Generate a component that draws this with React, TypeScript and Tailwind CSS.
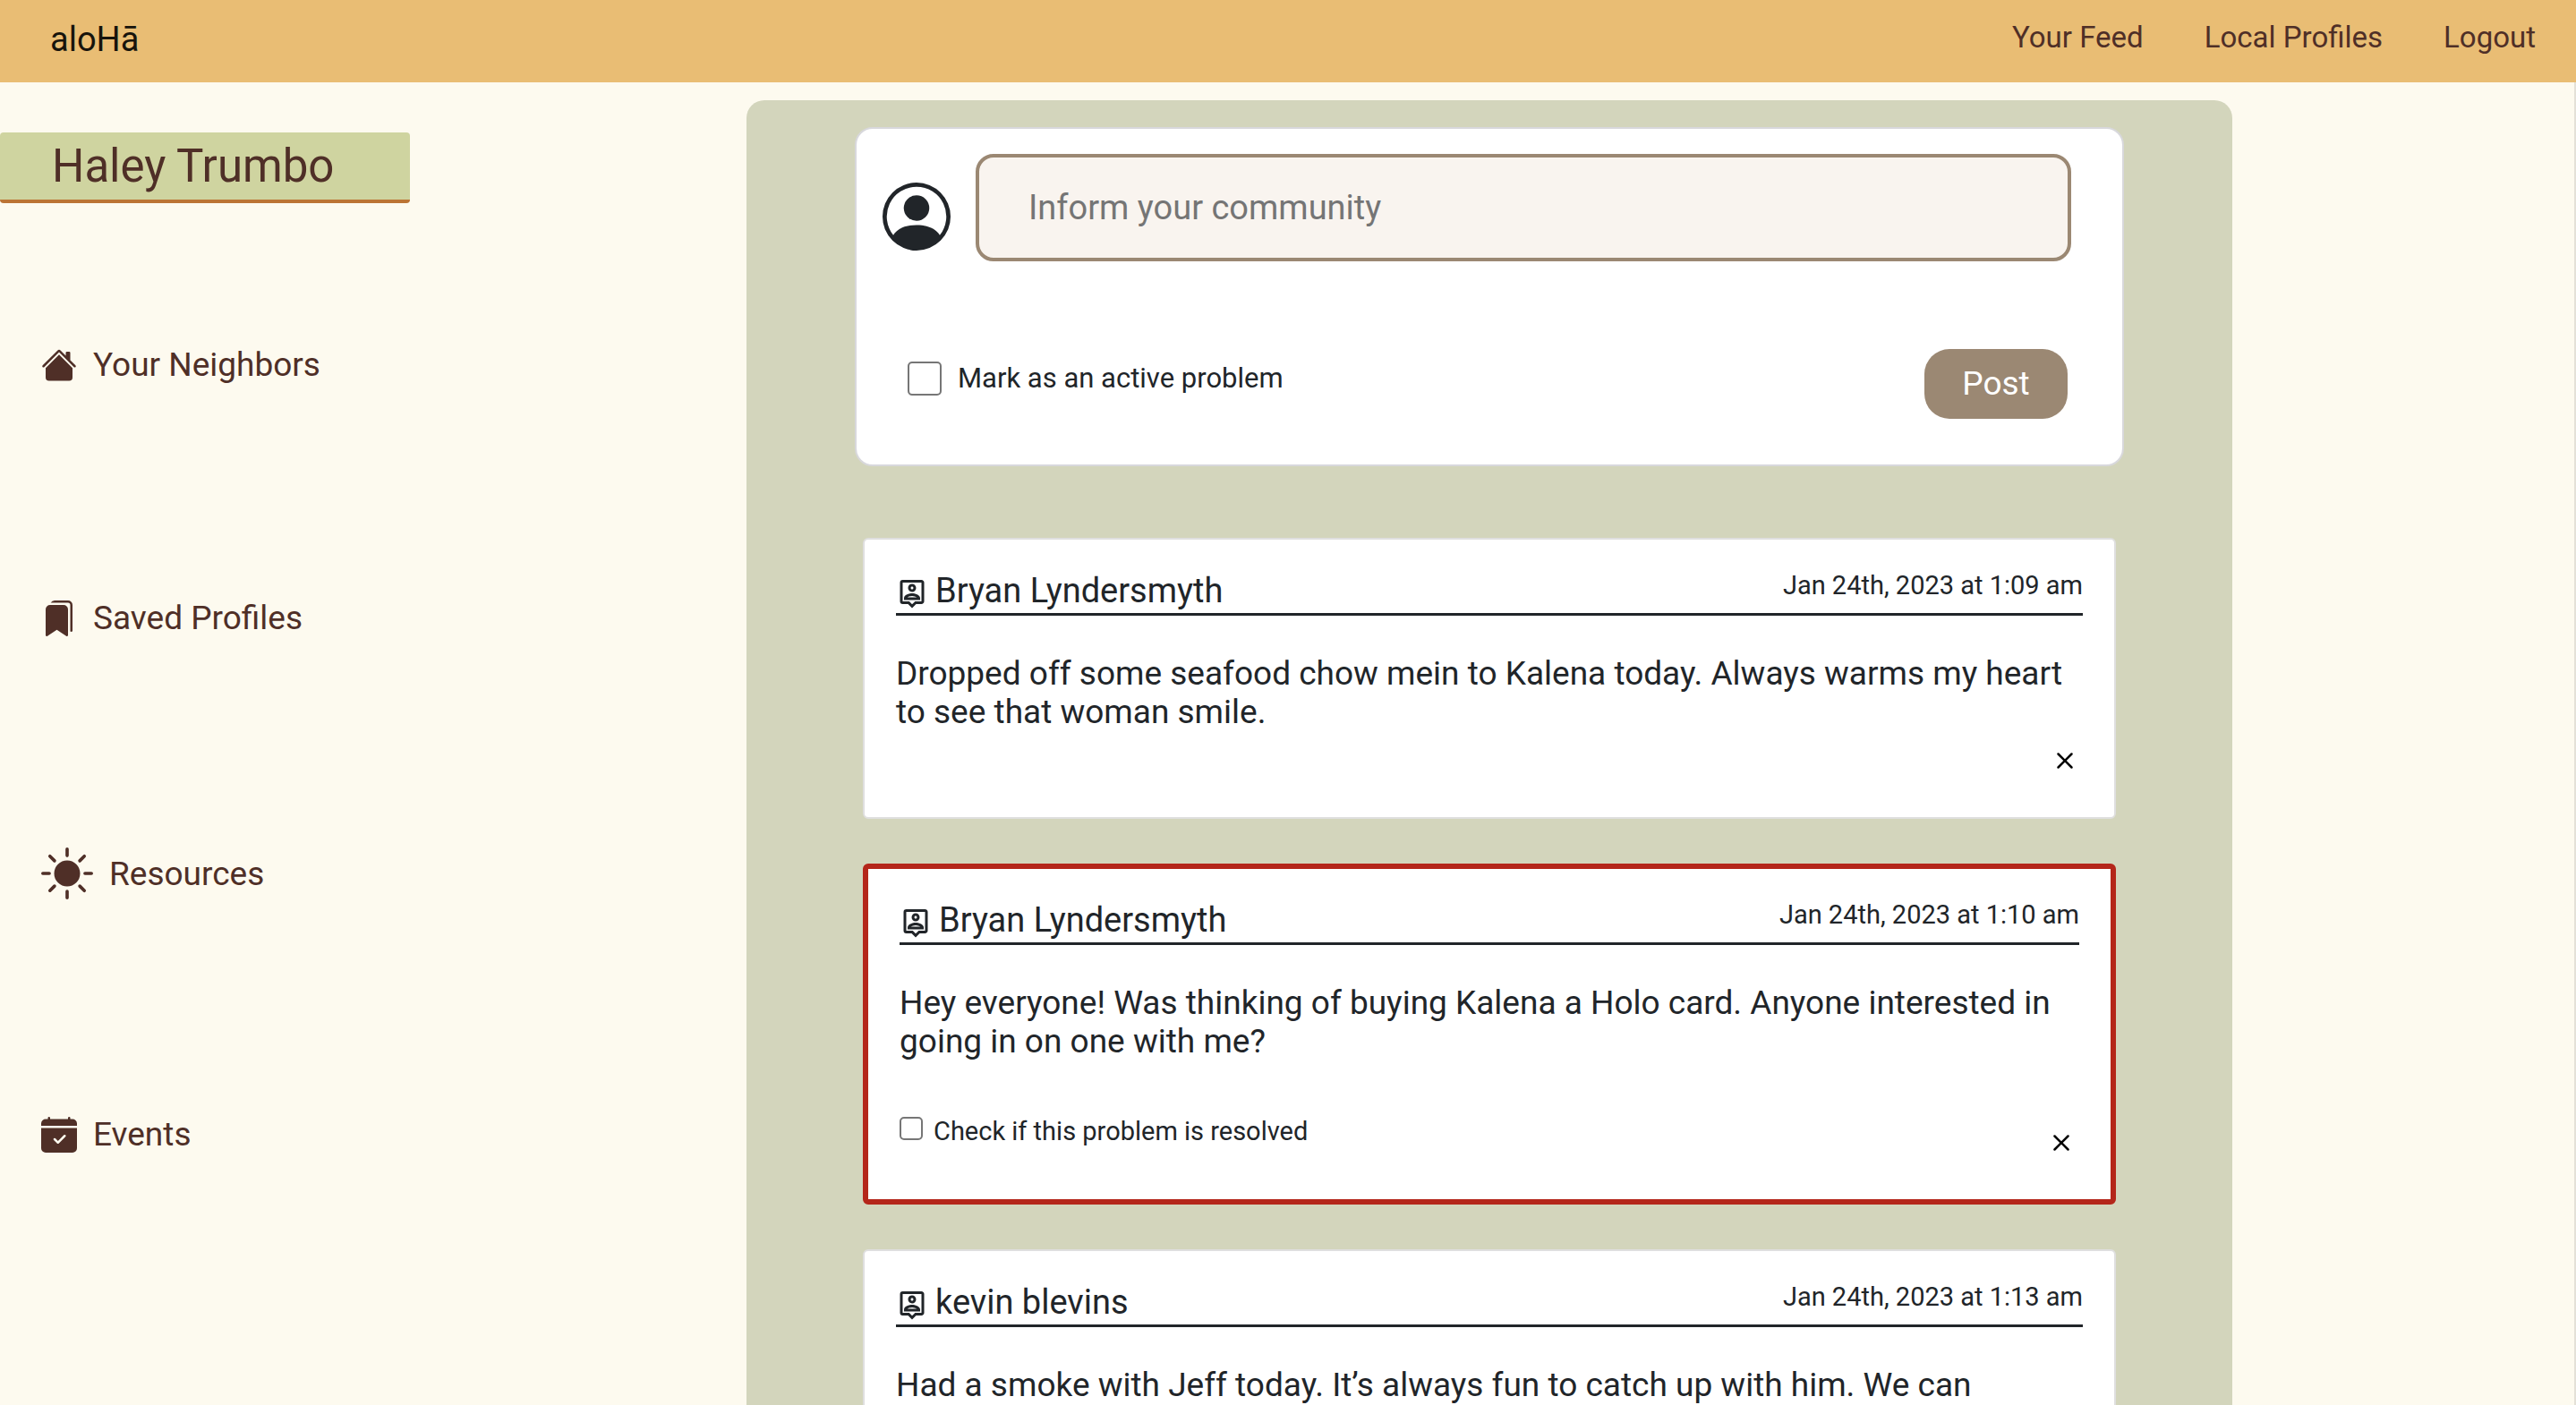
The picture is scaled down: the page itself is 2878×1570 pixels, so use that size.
import { useId } from "react";
import type { IconType } from "react-icons";
import {
  BsBookmarksFill,
  BsCalendarCheckFill,
  BsHouseFill,
  BsPersonCircle,
  BsSunFill,
  BsX,
} from "react-icons/bs";
import { MdOutlinePersonPin } from "react-icons/md";

const topLinks = ["Your Feed", "Local Profiles", "Logout"];

const sideLinks: { label: string; Icon: IconType; large?: boolean }[] = [
  { label: "Your Neighbors", Icon: BsHouseFill },
  { label: "Saved Profiles", Icon: BsBookmarksFill },
  { label: "Resources", Icon: BsSunFill, large: true },
  { label: "Events", Icon: BsCalendarCheckFill },
];

type Post = { author: string; date: string; body: string; problem?: boolean };

const posts: Post[] = [
  {
    author: "Bryan Lyndersmyth",
    date: "Jan 24th, 2023 at 1:09 am",
    body: "Dropped off some seafood chow mein to Kalena today. Always warms my heart to see that woman smile.",
  },
  {
    author: "Bryan Lyndersmyth",
    date: "Jan 24th, 2023 at 1:10 am",
    body: "Hey everyone! Was thinking of buying Kalena a Holo card. Anyone interested in going in on one with me?",
    problem: true,
  },
  {
    author: "kevin blevins",
    date: "Jan 24th, 2023 at 1:13 am",
    body: "Had a smoke with Jeff today. It’s always fun to catch up with him. We can",
  },
];

function TopBar() {
  return (
    <header className="flex h-[92px] shrink-0 items-center justify-between bg-[#e9bd74] pr-[45px] pl-14">
      <a href="#home" className="pb-1 text-[38px] text-[#17140c]">
        aloHā
      </a>
      <nav className="flex gap-[68px] pb-2 text-[33px] text-[#4f2f27]">
        {topLinks.map((label) => (
          <a key={label} href="#top">
            {label}
          </a>
        ))}
      </nav>
    </header>
  );
}

function Sidebar() {
  return (
    <aside className="pt-14 text-[#4f2f27]">
      <h1 className="w-[458px] rounded border-b-4 border-[#bb7434] bg-[#cfd4a0] pl-[58px] text-[51px] leading-[75px]">
        Haley Trumbo
      </h1>
      <nav className="mt-[154px] flex flex-col gap-[229px] pl-[46px] text-[37px]">
        {sideLinks.map(({ label, Icon, large }) => (
          <a
            key={label}
            href="#side"
            className={large ? "flex h-[65px] items-start gap-[18px]" : "flex h-[54px] items-center gap-[18px]"}
          >
            <Icon className={large ? "size-[58px]" : "size-10"} />
            <span className="leading-[60px]">{label}</span>
          </a>
        ))}
      </nav>
    </aside>
  );
}

function Composer() {
  return (
    <form
      className="rounded-[20px] border-2 border-[#d8d8dc] bg-white pt-7 pr-[57px] pb-[51px] pl-[29px]"
      onSubmit={(e) => e.preventDefault()}
    >
      <div className="flex items-start gap-7">
        <BsPersonCircle className="mt-8 size-[76px] shrink-0" />
        <input
          type="text"
          aria-label="Inform your community"
          placeholder="Inform your community"
          className="h-[120px] min-w-0 flex-1 rounded-[20px] border-4 border-[#9b8873] bg-[#f9f4ef] px-[55px] text-[38px] placeholder:text-[#757575]"
        />
      </div>
      <div className="mt-[98px] flex items-start justify-between pr-1 pl-7">
        <label className="mt-[14px] flex items-center gap-[18px] text-[31px] leading-[38px]">
          <input
            type="checkbox"
            className="size-[38px] appearance-none rounded-[5px] border-2 border-[#767676] bg-white checked:bg-[#9b8873]"
          />
          Mark as an active problem
        </label>
        <button
          type="submit"
          className="h-[78px] w-40 rounded-[28px] bg-[#9b8873] text-[37px] text-white"
        >
          Post
        </button>
      </div>
    </form>
  );
}

function PostCard({ author, date, body, problem }: Post) {
  const id = useId();
  return (
    <article
      className={
        problem
          ? "rounded-md border-6 border-[#b4261a] bg-white px-[35px] pt-8 pb-[43px]"
          : "rounded-md border-2 border-[#dfdfdf] bg-white px-[35px] pt-8 pb-[43px]"
      }
    >
      <header className="flex items-start justify-between border-b-3 border-[#212529]">
        <h2 className="flex items-end gap-2 text-[38px] leading-[50px]">
          <MdOutlinePersonPin className="mb-1 size-9" />
          {author}
        </h2>
        <time className="text-[29px] leading-[38px]">{date}</time>
      </header>
      <p className="mt-[43px] text-[37px] leading-[43px]">{body}</p>
      <footer className={problem ? "mt-[59px] flex items-start justify-between" : "mt-[13px] flex justify-end"}>
        {problem && (
          <label htmlFor={id} className="flex items-start gap-3 text-[29px] leading-10">
            <input
              id={id}
              type="checkbox"
              className="mt-1 size-[26px] appearance-none rounded-[5px] border-2 border-[#767676] bg-white checked:bg-[#9b8873]"
            />
            Check if this problem is resolved
          </label>
        )}
        <button
          type="button"
          aria-label="Delete post"
          className={problem ? "mt-[13px] text-black" : "text-black"}
        >
          <BsX className="size-10" />
        </button>
      </footer>
    </article>
  );
}

export default function App() {
  return (
    <div className="flex h-screen flex-col overflow-hidden bg-[#fdfaef] font-['Roboto',sans-serif] font-[450] text-[#212529]">
      <TopBar />
      <div className="grid min-h-0 flex-1 grid-cols-[834fr_1660fr_382fr] border-r-2 border-[#e4e1d8]">
        <Sidebar />
        <main className="mt-5 min-h-0 overflow-hidden rounded-t-[20px] bg-[#d3d5bc] px-[121px] pt-[30px]">
          <Composer />
          <section className="mt-20 flex flex-col gap-[50px] px-[9px]">
            {posts.map((post) => (
              <PostCard key={post.date} {...post} />
            ))}
          </section>
        </main>
      </div>
    </div>
  );
}
